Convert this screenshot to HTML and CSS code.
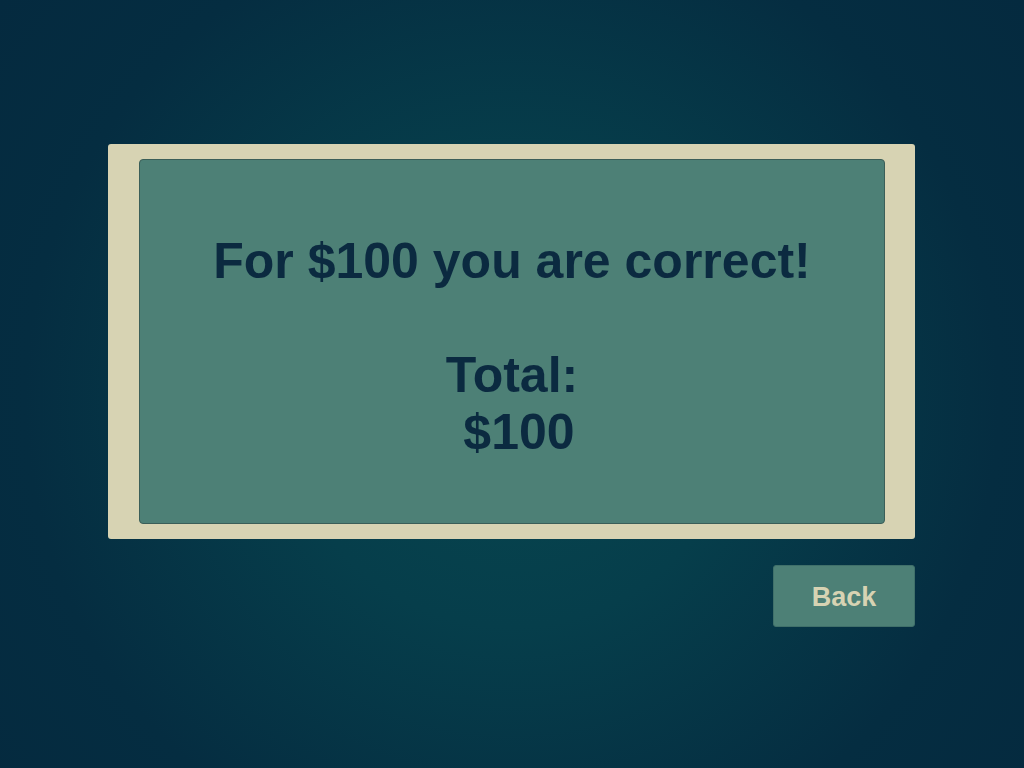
FILE: index.html
```html
<!DOCTYPE html>
<html>
<head>
<meta charset="utf-8">
<link rel="stylesheet" href="styles.css">
</head>
<body>
<main class="stage">
  <section class="frame">
    <div class="card">
      <p class="message">For $100 you are correct!<br><br>Total:<br>&nbsp;$100</p>
    </div>
  </section>
  <div class="actions">
    <button class="back">Back</button>
  </div>
</main>
</body>
</html>
```
FILE: styles.css
```css
html, body {
  margin: 0;
  height: 100%;
}
body {
  background: radial-gradient(circle at 50% 52%, #07464f 0%, #063e4b 35%, #052d41 75%, #052a3f 100%);
  font-family: "Liberation Sans", Arial, sans-serif;
  overflow: hidden;
}
.stage {
  width: 807px;
  margin-left: 108px;
  padding-top: 144px;
  display: flex;
  flex-direction: column;
}
.frame {
  background: #d7d3b3;
  border-radius: 3px;
  padding: 15px 30px 15px 31px;
  height: 365px;
}
.card {
  height: 100%;
  box-sizing: border-box;
  background: #4d8076;
  border: 1px solid #3b5e58;
  border-radius: 4px;
  display: flex;
  align-items: center;
  justify-content: center;
}
.message {
  margin: 0;
  padding-top: 10px;
  text-align: center;
  font-weight: bold;
  font-size: 50px;
  line-height: 57px;
  color: #0b2a40;
}
.actions {
  display: flex;
  justify-content: flex-end;
  margin-top: 26px;
}
.back {
  width: 142px;
  height: 62px;
  background: #4d8076;
  border: 1px solid #40706a;
  border-radius: 3px;
  color: #d7d3b3;
  font-family: "Liberation Sans", Arial, sans-serif;
  font-weight: bold;
  font-size: 27px;
  padding: 3px 0 0;
}
```
